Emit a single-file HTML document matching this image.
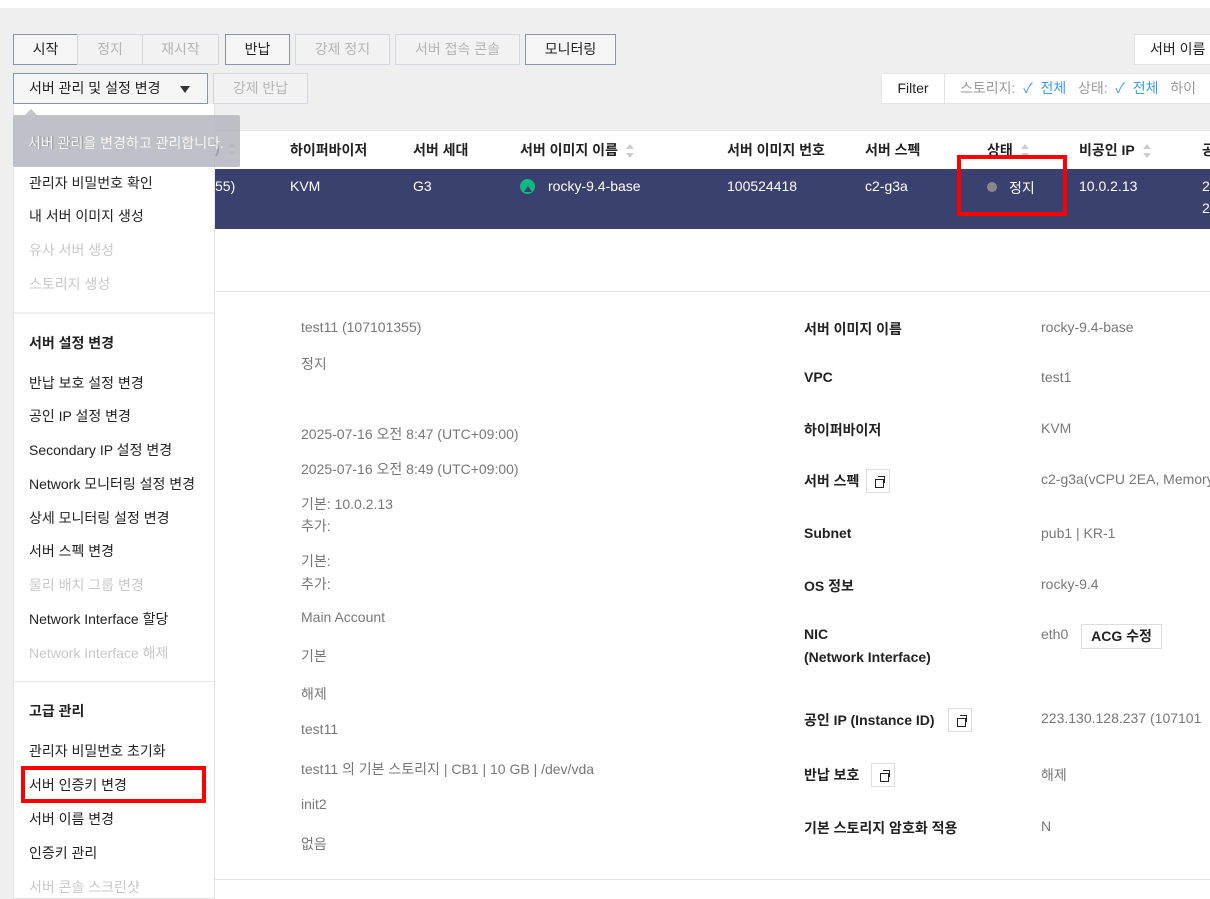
<!DOCTYPE html>
<html><head><meta charset="utf-8"><style>
*{margin:0;padding:0;box-sizing:border-box}
body{width:1210px;height:899px;overflow:hidden;position:relative;background:#fff;font-family:"Liberation Sans","Noto Sans CJK KR",sans-serif;font-size:14px;color:#222}
.a,.v,.l,.r,.mi,.th,.td{white-space:nowrap}
.a{position:absolute}
.btn{position:absolute;height:31px;border:1px solid #d4d7dc;background:#f2f2f2;color:#b5b5b5;text-align:center;line-height:29px;font-size:14px;white-space:nowrap}
.btn.on{border-color:#8a94a8;color:#222;background:#f5f5f5}
.th{position:absolute;top:140px;font-weight:bold;font-size:14px;color:#222}
.td{position:absolute;top:178px;color:#fff;font-size:14px}
.sort{display:inline-block;width:8px;height:14px;vertical-align:middle;margin-left:8px;position:relative}
.sort:before,.sort:after{content:"";position:absolute;left:0;border-left:4px solid transparent;border-right:4px solid transparent}
.sort:before{top:0;border-bottom:5px solid #ccc}.sort:after{bottom:0;border-top:5px solid #ccc}
.mi{position:absolute;left:29px;font-size:14px;color:#222}
.mi.d{color:#c8c8c8}.mi.b{font-weight:bold}
.v{position:absolute;left:301px;color:#777}
.l{position:absolute;left:804px;font-weight:bold}
.r{position:absolute;left:1041px;color:#777}
.cp{position:absolute;width:24px;height:24px;border:1px solid #ddd;background:#fff}
.cp:before{content:"";position:absolute;left:8px;top:9px;width:7px;height:7px;border:1.5px solid #222}
.cp:after{content:"";position:absolute;left:11px;top:6px;width:6px;height:6px;border-top:1.5px solid #222;border-right:1.5px solid #222}
</style></head><body>
<div class="a" style="left:0;top:8px;width:1210px;height:122px;background:#efefef"></div>
<div class="a" style="left:0;top:130px;width:13px;height:769px;background:#efefef"></div>

<div class="btn on" style="left:13px;top:34px;width:65px">시작</div>
<div class="btn" style="left:77px;top:34px;width:66px">정지</div>
<div class="btn" style="left:142px;top:34px;width:77px">재시작</div>
<div class="btn on" style="left:225px;top:34px;width:65px">반납</div>
<div class="btn" style="left:295px;top:34px;width:95px">강제 정지</div>
<div class="btn" style="left:395px;top:34px;width:125px">서버 접속 콘솔</div>
<div class="btn on" style="left:525px;top:34px;width:91px">모니터링</div>
<div class="btn on" style="left:13px;top:73px;width:195px;text-align:left;padding-left:15px">서버 관리 및 설정 변경<span style="position:absolute;left:166px;top:12px;border-left:5px solid transparent;border-right:5px solid transparent;border-top:7px solid #333"></span></div>
<div class="btn" style="left:213px;top:73px;width:95px">강제 반납</div>
<div class="btn" style="left:1134px;top:34px;width:80px;background:#fff;border-color:#e3e3e3;color:#222;text-align:left;padding-left:15px">서버 이름</div>
<div class="btn" style="left:881px;top:73px;width:64px;background:#fff;border-color:#e3e3e3;color:#222">Filter</div>
<div class="btn" style="left:944px;top:73px;width:270px;background:#fff;border-color:#e3e3e3;color:#999;text-align:left;padding-left:15px">스토리지: &nbsp;<span style="color:#3d9be9">✓ &nbsp;전체</span> &nbsp;&nbsp;상태: &nbsp;<span style="color:#3d9be9">✓ &nbsp;전체</span> &nbsp;&nbsp;하이</div>

<div class="a" style="left:13px;top:130px;width:1197px;height:39px;background:#fff;border-top:1px solid #e5e5e5"></div>
<div class="th" style="left:215px">)<span class="sort"></span></div>
<div class="th" style="left:290px">하이퍼바이저</div>
<div class="th" style="left:413px">서버 세대</div>
<div class="th" style="left:520px">서버 이미지 이름<span class="sort"></span></div>
<div class="th" style="left:727px">서버 이미지 번호</div>
<div class="th" style="left:865px">서버 스펙</div>
<div class="th" style="left:987px">상태<span class="sort"></span></div>
<div class="th" style="left:1079px">비공인 IP<span class="sort"></span></div>
<div class="th" style="left:1202px">공</div>
<div class="a" style="left:13px;top:169px;width:1197px;height:60px;background:#3b416f"></div>
<div class="td" style="left:215px">55)</div>
<div class="td" style="left:290px">KVM</div>
<div class="td" style="left:413px">G3</div>
<div class="a" style="left:520px;top:179px;width:15px;height:15px;border-radius:50%;background:#10b981"></div>
<div class="a" style="left:524px;top:186px;border-left:4px solid transparent;border-right:4px solid transparent;border-bottom:6px solid #3b416f"></div>
<div class="td" style="left:548px">rocky-9.4-base</div>
<div class="td" style="left:727px">100524418</div>
<div class="td" style="left:865px">c2-g3a</div>
<div class="a" style="left:987px;top:182px;width:10px;height:10px;border-radius:50%;background:#888"></div>
<div class="td" style="left:1009px">정지</div>
<div class="td" style="left:1079px">10.0.2.13</div>
<div class="td" style="left:1202px">2</div>
<div class="td" style="left:1202px;top:200px">2</div>
<div class="a" style="left:957px;top:155px;width:110px;height:61px;border:4px solid #f00"></div>

<div class="a" style="left:200px;top:291px;width:1010px;height:1px;background:#e3e3e3"></div>
<div class="a" style="left:200px;top:879px;width:1010px;height:1px;background:#e3e3e3"></div>

<div class="v" style="top:319px">test11 (107101355)</div>
<div class="v" style="top:354px">정지</div>
<div class="v" style="top:424px">2025-07-16 오전 8:47 (UTC+09:00)</div>
<div class="v" style="top:459px">2025-07-16 오전 8:49 (UTC+09:00)</div>
<div class="v" style="top:494px">기본: 10.0.2.13</div>
<div class="v" style="top:516px">추가:</div>
<div class="v" style="top:551px">기본:</div>
<div class="v" style="top:574px">추가:</div>
<div class="v" style="top:609px">Main Account</div>
<div class="v" style="top:646px">기본</div>
<div class="v" style="top:684px">해제</div>
<div class="v" style="top:721px">test11</div>
<div class="v" style="top:759px">test11 의 기본 스토리지 | CB1 | 10 GB | /dev/vda</div>
<div class="v" style="top:796px">init2</div>
<div class="v" style="top:834px">없음</div>

<div class="l" style="top:319px">서버 이미지 이름</div><div class="r" style="top:319px">rocky-9.4-base</div>
<div class="l" style="top:369px">VPC</div><div class="r" style="top:369px">test1</div>
<div class="l" style="top:420px">하이퍼바이저</div><div class="r" style="top:420px">KVM</div>
<div class="l" style="top:471px">서버 스펙</div><div class="cp" style="left:866px;top:469px"></div><div class="r" style="top:471px">c2-g3a(vCPU 2EA, Memory</div>
<div class="l" style="top:525px">Subnet</div><div class="r" style="top:525px">pub1 | KR-1</div>
<div class="l" style="top:576px">OS 정보</div><div class="r" style="top:576px">rocky-9.4</div>
<div class="l" style="top:626px">NIC</div><div class="l" style="top:649px">(Network Interface)</div>
<div class="r" style="top:626px">eth0</div>
<div class="a" style="left:1081px;top:624px;width:81px;height:25px;border:1px solid #ddd;text-align:center;line-height:23px;font-weight:bold">ACG 수정</div>
<div class="l" style="top:710px">공인 IP (Instance ID)</div><div class="cp" style="left:948px;top:708px"></div><div class="r" style="top:710px">223.130.128.237 (107101</div>
<div class="l" style="top:765px">반납 보호</div><div class="cp" style="left:871px;top:763px"></div><div class="r" style="top:765px">해제</div>
<div class="l" style="top:818px">기본 스토리지 암호화 적용</div><div class="r" style="top:818px">N</div>

<div class="a" style="left:13px;top:104px;width:202px;height:795px;background:#fff;border:1px solid #e3e3e3;border-top:none"></div>
<div class="a" style="left:14px;top:312px;width:200px;height:2px;background:#eee"></div>
<div class="a" style="left:14px;top:681px;width:200px;height:1px;background:#e5e5e5"></div>
<div class="mi b" style="top:133px">서버 관리</div>
<div class="mi" style="top:173px">관리자 비밀번호 확인</div>
<div class="mi" style="top:206px">내 서버 이미지 생성</div>
<div class="mi d" style="top:240px">유사 서버 생성</div>
<div class="mi d" style="top:274px">스토리지 생성</div>
<div class="mi b" style="top:333px">서버 설정 변경</div>
<div class="mi" style="top:373px">반납 보호 설정 변경</div>
<div class="mi" style="top:406px">공인 IP 설정 변경</div>
<div class="mi" style="top:440px">Secondary IP 설정 변경</div>
<div class="mi" style="top:474px">Network 모니터링 설정 변경</div>
<div class="mi" style="top:508px">상세 모니터링 설정 변경</div>
<div class="mi" style="top:541px">서버 스펙 변경</div>
<div class="mi d" style="top:575px">물리 배치 그룹 변경</div>
<div class="mi" style="top:609px">Network Interface 할당</div>
<div class="mi d" style="top:643px">Network Interface 해제</div>
<div class="mi b" style="top:701px">고급 관리</div>
<div class="mi" style="top:741px">관리자 비밀번호 초기화</div>
<div class="mi" style="top:775px">서버 인증키 변경</div>
<div class="mi" style="top:809px">서버 이름 변경</div>
<div class="mi" style="top:843px">인증키 관리</div>
<div class="mi d" style="top:877px">서버 콘솔 스크린샷</div>
<div class="a" style="left:21px;top:766px;width:185px;height:37px;border:4px solid #f00"></div>

<div class="a" style="left:13px;top:115px;width:227px;height:52px;background:rgba(180,182,190,0.85);border-radius:2px"></div>
<div class="a" style="left:25px;top:109px;border-left:6px solid transparent;border-right:6px solid transparent;border-bottom:6px solid #c4c6cc"></div>
<div class="a" style="left:28px;top:133px;color:#f4f4f4;font-size:14px">서버 관리을 변경하고 관리합니다.</div>
</body></html>
